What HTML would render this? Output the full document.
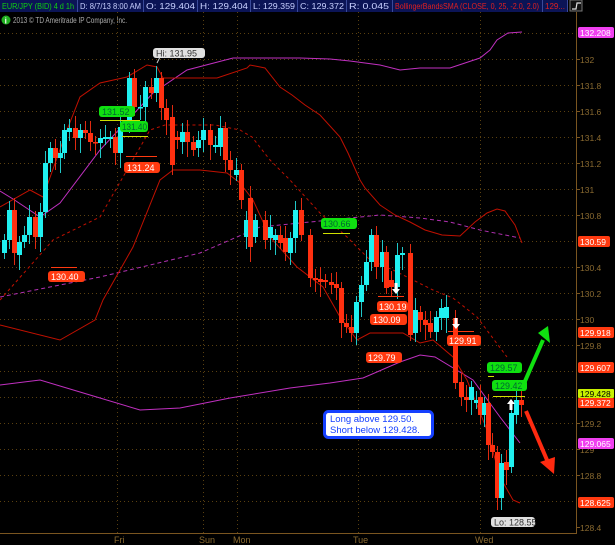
<!DOCTYPE html>
<html><head><meta charset="utf-8"><style>
html,body{margin:0;padding:0;background:#000;width:615px;height:545px;overflow:hidden}
svg{display:block}
text{font-family:"Liberation Sans",sans-serif}
</style></head><body>
<svg id="s" width="615" height="545" viewBox="0 0 615 545" xmlns="http://www.w3.org/2000/svg">
<rect width="615" height="545" fill="#000"/>
<!-- top bar -->
<rect x="0" y="0" width="568" height="12" fill="#0b1456"/>
<g stroke="#3a4a9a" stroke-width="1">
<line x1="77.5" y1="0" x2="77.5" y2="12"/><line x1="143.5" y1="0" x2="143.5" y2="12"/><line x1="197.5" y1="0" x2="197.5" y2="12"/><line x1="250.5" y1="0" x2="250.5" y2="12"/><line x1="297.5" y1="0" x2="297.5" y2="12"/><line x1="346.5" y1="0" x2="346.5" y2="12"/><line x1="392.5" y1="0" x2="392.5" y2="12"/><line x1="542.5" y1="0" x2="542.5" y2="12"/><line x1="567.5" y1="0" x2="567.5" y2="12"/>
</g>
<g font-size="8" fill="#c8d0ff">
<text x="2" y="9" fill="#10d010" textLength="72" lengthAdjust="spacingAndGlyphs">EUR/JPY (BID) 4 d 1h</text>
<text x="80" y="9" textLength="61" lengthAdjust="spacingAndGlyphs">D: 8/7/13 8:00 AM</text>
<text x="146" y="9" textLength="49" lengthAdjust="spacingAndGlyphs">O: 129.404</text>
<text x="200" y="9" textLength="48" lengthAdjust="spacingAndGlyphs">H: 129.404</text>
<text x="253" y="9" textLength="42" lengthAdjust="spacingAndGlyphs">L: 129.359</text>
<text x="300" y="9" textLength="44" lengthAdjust="spacingAndGlyphs">C: 129.372</text>
<text x="349" y="9" textLength="40" lengthAdjust="spacingAndGlyphs">R: 0.045</text>
<text x="395" y="9" fill="#e02020" textLength="144" lengthAdjust="spacingAndGlyphs">BollingerBandsSMA (CLOSE, 0, 25, -2.0, 2.0)</text>
<text x="545" y="9" fill="#e02020" textLength="20" lengthAdjust="spacingAndGlyphs">129...</text>
</g>
<rect x="570" y="0" width="12" height="11" fill="#111" stroke="#777"/>
<path d="M572 9 L576 9 L577 3 L581 3" stroke="#ddd" fill="none" stroke-width="1.2"/>
<!-- copyright -->
<circle cx="6" cy="20" r="4.5" fill="#20b020"/>
<text x="4.6" y="23.5" font-size="8" fill="#fff" font-weight="bold">i</text>
<text x="13" y="23" font-size="8" fill="#aaa" textLength="114" lengthAdjust="spacingAndGlyphs">2013 © TD Ameritrade IP Company, Inc.</text>
<g id="grid"></g>
<g id="lines"></g>
<g id="candles"></g>
<!-- axes -->
<line x1="576.5" y1="12" x2="576.5" y2="533" stroke="#7a5520"/>
<line x1="0" y1="533.5" x2="577" y2="533.5" stroke="#7a5520"/>
<g font-size="9" fill="#8a6a30">
<text x="114" y="543">Fri</text><text x="199" y="543">Sun</text><text x="233" y="543">Mon</text><text x="353" y="543">Tue</text><text x="475" y="543">Wed</text>
</g>
<g id="axl" font-size="8.5" fill="#8a6a30"></g>
<!-- right labels -->
<g font-size="8.5">
<rect x="578" y="27" width="36" height="11" rx="2" fill="#f040f0"/><text x="580" y="36" fill="#fff">132.208</text>
<rect x="578" y="236" width="32" height="11" rx="2" fill="#ff3a10"/><text x="580" y="245" fill="#fff">130.59</text>
<rect x="578" y="327" width="36" height="11" rx="2" fill="#ff3a10"/><text x="580" y="336" fill="#fff">129.918</text>
<rect x="578" y="362" width="36" height="11" rx="2" fill="#ff3a10"/><text x="580" y="371" fill="#fff">129.607</text>
<rect x="578" y="389" width="36" height="9" rx="1" fill="#c8f000"/><text x="580" y="397" fill="#000">129.428</text>
<rect x="578" y="398" width="36" height="10" rx="1" fill="#ff3a10"/><text x="580" y="406" fill="#fff">129.372</text>
<rect x="578" y="438" width="36" height="11" rx="2" fill="#f040f0"/><text x="580" y="447" fill="#fff">129.065</text>
<rect x="578" y="497" width="36" height="11" rx="2" fill="#ff3a10"/><text x="580" y="506" fill="#fff">128.625</text>
</g>
<!-- flags -->
<g font-size="9">
<path d="M160 57 L157 63" stroke="#ccc"/>
<rect x="153" y="48" width="52" height="10" rx="3" fill="#e0e0e0"/><text x="156" y="56.5" fill="#333">Hi: 131.95</text>
<line x1="100" y1="120.5" x2="140" y2="120.5" stroke="#d0e000"/>
<rect x="99" y="106" width="36" height="11" rx="3" fill="#10e010"/><text x="102" y="115" fill="#063">131.52</text>
<line x1="122" y1="136.5" x2="148" y2="136.5" stroke="#d0e000"/>
<rect x="120" y="121" width="28" height="11" rx="3" fill="#10e010"/><text x="122" y="130" fill="#063" textLength="25" lengthAdjust="spacingAndGlyphs">131.40</text>
<line x1="126" y1="156.5" x2="157" y2="156.5" stroke="#ff3a10"/>
<rect x="124" y="162" width="36" height="11" rx="3" fill="#ff3a10"/><text x="127" y="171" fill="#fff">131.24</text>
<line x1="51" y1="267.5" x2="77" y2="267.5" stroke="#ff3a10"/>
<rect x="48" y="271" width="37" height="11" rx="3" fill="#ff3a10"/><text x="51" y="280" fill="#fff">130.40</text>
<line x1="323" y1="233.5" x2="350" y2="233.5" stroke="#d0e000"/>
<rect x="321" y="218" width="36" height="11" rx="3" fill="#10e010"/><text x="323" y="227" fill="#063">130.66</text>
<line x1="378" y1="296.5" x2="404" y2="296.5" stroke="#ff3a10"/>
<rect x="377" y="301" width="31" height="11" rx="3" fill="#ff3a10"/><text x="379" y="310" fill="#fff">130.19</text>
<rect x="370" y="314" width="37" height="11" rx="3" fill="#ff3a10"/><text x="373" y="323" fill="#fff">130.09</text>
<rect x="366" y="352" width="36" height="11" rx="3" fill="#ff3a10"/><text x="368" y="361" fill="#fff">129.79</text>
<line x1="448" y1="331.5" x2="474" y2="331.5" stroke="#ff3a10"/>
<rect x="447" y="335" width="34" height="11" rx="3" fill="#ff3a10"/><text x="449" y="344" fill="#fff">129.91</text>
<rect x="487" y="362" width="35" height="11" rx="3" fill="#10e010"/><text x="490" y="371" fill="#063">129.57</text>
<line x1="488" y1="376.5" x2="494" y2="376.5" stroke="#d0e000"/>
<rect x="492" y="380" width="35" height="11" rx="3" fill="#10e010"/><text x="495" y="389" fill="#063">129.42</text>
<line x1="493" y1="396.5" x2="525" y2="396.5" stroke="#d0e000"/>
<rect x="491" y="517" width="44" height="10" rx="3" fill="#e0e0e0"/><text x="494" y="525.5" fill="#333">Lo: 128.55</text>
</g>
<!-- white arrows -->
<path d="M394.5 283 h3 v6 h2.5 l-4 5 l-4 -5 h2.5z" fill="#fff"/>
<path d="M454.5 318 h3 v6 h2.5 l-4 5 l-4 -5 h2.5z" fill="#fff"/>
<path d="M509.5 410 h3 v-6 h2.5 l-4 -5 l-4 5 h2.5z" fill="#fff"/>
<!-- big arrows -->
<line x1="522" y1="388" x2="543" y2="340" stroke="#10e010" stroke-width="4"/>
<path d="M538 333 L548 326 L550 343 Z" fill="#10e010"/>
<line x1="526" y1="411" x2="547" y2="460" stroke="#ff2a10" stroke-width="4"/>
<path d="M540 462 L554 474 L555 457 Z" fill="#ff2a10"/>
<!-- note box -->
<rect x="324.5" y="411.5" width="108" height="26" rx="4" fill="#fff" stroke="#1540ff" stroke-width="3"/>
<text x="330" y="422" font-size="9.5" fill="#1540ff">Long above 129.50.</text>
<text x="330" y="433" font-size="9.5" fill="#1540ff">Short below 129.428.</text>
</svg>
<script>
var NS="http://www.w3.org/2000/svg";
function el(p,t,a){var e=document.createElementNS(NS,t);for(var k in a)e.setAttribute(k,a[k]);document.getElementById(p).appendChild(e);return e;}
for(var i=0;i<19;i++){var y=33+i*26;if(y>530)break;el('grid','line',{x1:0,y1:y+.5,x2:576,y2:y+.5,stroke:'#5a4010','stroke-dasharray':'1,3'});}
[117,203,237,358,480].forEach(function(x){el('grid','line',{x1:x+.5,y1:12,x2:x+.5,y2:533,stroke:'#5a4010','stroke-dasharray':'1,3'});});
var labs=['132','131.8','131.6','131.4','131.2','131','130.8','','130.4','130.2','130','129.8','','','129.2','129','128.8','','128.4'];
labs.forEach(function(t,i){if(!t)return;var y=59+i*26;el('axl','line',{x1:576,y1:y+.5,x2:580,y2:y+.5,stroke:'#7a5520'});var e=el('axl','text',{x:580,y:y+4});e.textContent=t;});
function pl(pts,c,dash,w){el('lines','polyline',{points:pts,fill:'none',stroke:c,'stroke-width':w||1,'stroke-dasharray':dash||'none'});}
pl('0,191 13,199 40,217 60,203 100,150 153,93 187,70 233,58 300,58 330,59 350,61 380,65 400,70 420,68 450,68 480,58 490,50 497,40 508,33 522,32','#c030c0');
pl('0,385 40,380 90,395 140,410 180,408 230,398 290,388 330,383 363,378 400,362 420,355 435,357 473,380 500,417 520,443','#c030c0');
pl('0,297 100,277 200,253 260,227 330,220 380,215 420,218 450,222 480,230 520,238','#b030b0','4,3');
pl('0,207 30,190 43,197 67,130 80,97 100,83 127,77 147,65 157,67 163,78 217,78 247,68 250,65 265,68 280,87 292,95 305,105 320,115 340,137 348,153 360,180 365,188 380,205 395,215 410,222 425,230 442,235 460,236 475,222 487,213 497,209 505,211 515,225 522,243','#c01000');
pl('0,300 53,240 100,217 150,130 165,125 215,125 240,130 252,137 270,160 290,180 320,213 347,237 370,260 393,270 433,290 453,298 477,317 507,357','#c01000','3,3');
pl('0,325 60,340 95,320 103,300 133,247 160,180 173,170 200,170 227,173 240,183 253,200 270,237 297,267 323,287 340,317 357,340 370,333 403,333 420,343 433,340 453,357 467,380 487,430 500,477 513,500 520,503','#c01000');
var C=[[4,253,240],[9,240,210],[14,210,253],[19,255,242],[24,242,235],[29,235,217],[35,217,237],[40,237,212],[45,212,163],[50,163,148],[55,148,158],[60,158,153],[64,153,130],[69,132,128],[75,128,138],[80,138,130],[85,130,133],[90,133,142],[95,142,143],[100,143,138],[105,139,137],[110,139,137],[115,137,153],[120,153,127],[129,127,78],[134,78,107],[140,108,107],[145,107,87],[151,87,93],[156,93,78],[161,78,108],[166,108,120],[172,117,165],[177,137,140],[182,142,132],[187,132,142],[193,142,150],[198,148,140],[203,140,130],[210,130,145],[215,147,145],[220,147,128],[225,128,160],[230,160,170],[236,175,170],[241,170,200],[246,237,220],[250,198,247],[255,237,220],[265,220,240],[270,238,227],[275,240,235],[280,235,243],[285,238,252],[290,253,238],[295,238,210],[301,210,235],[310,235,278],[315,278,280],[320,279,282],[325,280,282],[331,282,285],[336,284,288],[341,288,323],[346,323,327],[351,327,333],[356,333,302],[361,302,285],[366,285,262],[371,262,235],[376,235,267],[382,267,252],[386,252,288],[391,280,287],[397,287,255],[402,255,253],[410,253,335],[415,333,310],[420,312,320],[425,320,325],[430,323,332],[436,332,317],[441,318,308],[446,318,307],[455,318,383],[461,382,397],[466,397,400],[471,400,387],[476,403,400],[480,397,415],[484,415,403],[488,403,445],[492,445,452],[497,452,498],[501,498,463],[506,462,470],[511,467,413],[516,415,400],[521,400,405]];
C.forEach(function(c,i){var x=c[0],o=c[1],cl=c[2],up=cl<o,col=up?'#20f0f0':'#ff3010';var t=Math.min(o,cl),b=Math.max(o,cl);var h=t-6-(i%3)*3,l=b+6+(i%4)*3;if(x==497)l=510;if(x==172)l=175;if(x==455)h=310;
el('candles','line',{x1:x+.5,y1:h,x2:x+.5,y2:l,stroke:up?'#20c8c8':'#e02a10'});
el('candles','rect',{x:x-2,y:t,width:5,height:Math.max(1.5,b-t),fill:col});});
</script>
</body></html>
